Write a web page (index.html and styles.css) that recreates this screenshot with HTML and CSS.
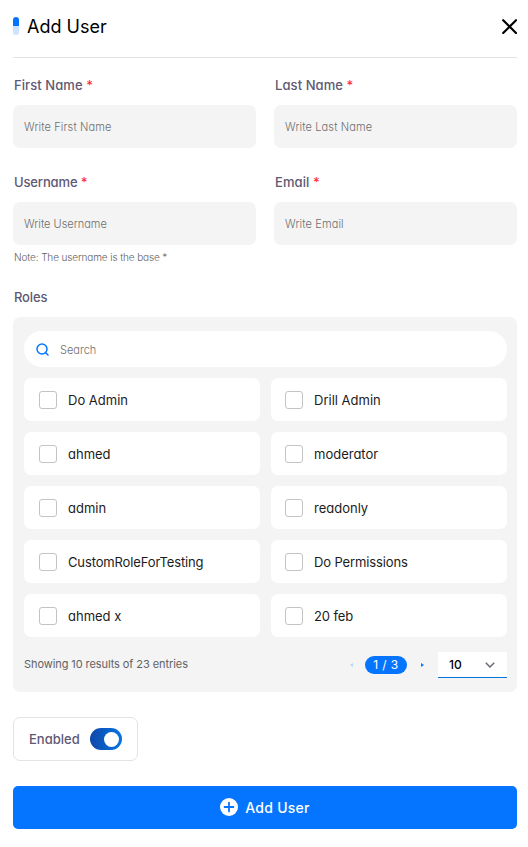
FILE: index.html
```html
<!DOCTYPE html>
<html lang="en">
<head>
<meta charset="utf-8">
<title>Add User</title>
<link rel="stylesheet" href="styles.css">
</head>
<body>
<main class="modal">
  <header class="header">
    <span class="marker"></span>
    <h1 class="title">Add User</h1>
    <svg class="close" viewBox="0 0 15 15" aria-label="Close"><path d="M1.2 1.2 14 14M14 1.2 1.2 14"/></svg>
  </header>

  <form class="form">
    <div class="fields">
      <div class="field"><label class="label">First Name <b class="req">*</b></label><div class="input">Write First Name</div></div>
      <div class="field"><label class="label">Last Name <b class="req">*</b></label><div class="input">Write Last Name</div></div>
      <div class="field"><label class="label tight">Username <b class="req">*</b></label><div class="input flat">Write Username</div><p class="note">Note: The username is the base *</p></div>
      <div class="field"><label class="label">Email <b class="req">*</b></label><div class="input">Write Email</div></div>
    </div>

    <div class="label roles-label tight">Roles</div>
    <section class="panel">
      <div class="search">
        <svg class="search-icon" viewBox="0 0 13 13"><circle cx="6" cy="6" r="5"/><path d="m9.7 9.7 2.3 2.3"/></svg>
        <span>Search</span>
      </div>
      <div class="roles">
        <div class="role"><i class="box"></i><span>Do Admin</span></div>
        <div class="role"><i class="box"></i><span>Drill Admin</span></div>
        <div class="role"><i class="box"></i><span>ahmed</span></div>
        <div class="role"><i class="box"></i><span>moderator</span></div>
        <div class="role"><i class="box"></i><span>admin</span></div>
        <div class="role"><i class="box"></i><span>readonly</span></div>
        <div class="role"><i class="box"></i><span class="tight">CustomRoleForTesting</span></div>
        <div class="role"><i class="box"></i><span class="tight">Do Permissions</span></div>
        <div class="role"><i class="box"></i><span>ahmed x</span></div>
        <div class="role"><i class="box"></i><span class="tight">20 feb</span></div>
      </div>
      <footer class="pager">
        <span class="summary">Showing 10 results of 23 entries</span>
        <svg class="arrow prev" viewBox="0 0 3 4"><path d="M3 0v4L0 2z"/></svg>
        <span class="page">1 / 3</span>
        <svg class="arrow next" viewBox="0 0 3 4"><path d="M0 0v4l3-2z"/></svg>
        <div class="select"><span>10</span><svg class="chevron" viewBox="0 0 10 6"><path d="m.8.8 4.2 4.2L9.2.8"/></svg></div>
      </footer>
    </section>

    <div class="enabled"><span>Enabled</span><span class="switch"><i class="knob"></i></span></div>

    <button class="submit" type="button">
      <svg class="plus" viewBox="0 0 18 18"><circle cx="9" cy="9" r="9"/><path d="M9 4.6v8.8M4.6 9h8.8"/></svg>
      <span>Add User</span>
    </button>
  </form>
</main>
</body>
</html>
```

FILE: styles.css
```css
* { box-sizing: border-box; }
body {
  margin: 0;
  background: #fff;
  color: #1c1c1c;
  font-family: Inter, "Open Sans", sans-serif;
  font-feature-settings: "cv11" 1;
  font-size: 13px;
}
.modal { padding: 0 11px 18px 13px; }
.header {
  display: flex;
  align-items: center;
  height: 58px;
  padding-bottom: 4px;
  border-bottom: 1px solid #e3e3e3;
}
.marker {
  width: 6px;
  height: 18px;
  margin: 0 8px 2px 0;
  border-radius: 3px;
  background: linear-gradient(#0575ff 50%, #cde3ff 50%);
}
.title {
  margin: 0;
  color: #000;
  font-size: 18px;
  font-weight: 400;
  line-height: 24px;
}
.close {
  width: 15px;
  height: 15px;
  margin-left: auto;
  fill: none;
  stroke: #000;
  stroke-width: 2.2;
  stroke-linecap: round;
}
.fields {
  display: grid;
  grid-template-columns: 1fr 1fr;
  gap: 26px 18px;
  padding-top: 19px;
}
.field { height: 71px; }
.label {
  display: block;
  height: 16px;
  margin-bottom: 12px;
  padding-left: 1px;
  color: #5e5873;
  font-size: 13px;
  font-weight: 500;
  letter-spacing: .08px;
  line-height: 16px;
}
.tight { letter-spacing: -.13px; }
.req { color: #f33; font-weight: 500; }
.input {
  display: flex;
  align-items: center;
  height: 43px;
  padding: 0 11px;
  border-radius: 7px;
  background: #f4f4f4;
  color: #6f6f6f;
  font-size: 11px;
  font-weight: 300;
  letter-spacing: .12px;
}
.flat { letter-spacing: 0; }
.note {
  margin: 6px 0 0 1px;
  color: #626262;
  font-size: 10px;
  font-weight: 300;
  letter-spacing: -.12px;
  line-height: 13px;
}
.roles-label { margin-top: 44px; }
.panel {
  height: 375px;
  padding: 14px 10px 0 11px;
  border-radius: 7px;
  background: #f4f4f4;
}
.search {
  display: flex;
  align-items: center;
  gap: 11px;
  height: 36px;
  padding-left: 12px;
  border-radius: 18px;
  background: #fff;
  color: #6f6f6f;
  font-size: 11px;
  font-weight: 300;
}
.search span { padding-top: 2px; }
.search-icon {
  width: 13px;
  height: 13px;
  fill: none;
  stroke: #0575ff;
  stroke-width: 1.5;
  stroke-linecap: round;
}
.roles {
  display: grid;
  grid-template-columns: 1fr 1fr;
  gap: 11px;
  margin-top: 11px;
}
.role {
  display: flex;
  align-items: center;
  gap: 11px;
  height: 43px;
  padding: 0 0 0 15px;
  border-radius: 7px;
  background: #fff;
}
.role:nth-child(even) { padding-left: 14px; }
.box {
  width: 18px;
  height: 18px;
  border: 1px solid #c4c4c4;
  border-radius: 3px;
}
.pager {
  display: flex;
  align-items: center;
  height: 26px;
  margin-top: 15px;
}
.summary {
  padding-bottom: 2px;
  color: #626262;
  font-size: 11px;
  letter-spacing: -.08px;
}
.arrow { width: 3px; height: 4px; fill: #0575ff; }
.prev { margin-left: auto; fill: #b8d8f8; }
.page {
  width: 42px;
  height: 18px;
  margin: 0 14px 0 12px;
  border-radius: 9px;
  background: #0575ff;
  color: #fff;
  font-size: 12px;
  letter-spacing: .4px;
  line-height: 18px;
  text-align: center;
}
.select {
  display: flex;
  align-items: center;
  justify-content: space-between;
  width: 69px;
  height: 26px;
  margin-left: 14px;
  padding: 0 12px 0 11px;
  border-bottom: 1px solid #0575d8;
  background: #fff;
  color: #000;
  font-size: 12px;
  font-weight: 500;
}
.chevron {
  width: 10px;
  height: 6px;
  fill: none;
  stroke: #666c75;
  stroke-width: 1.5;
}
.enabled {
  display: flex;
  align-items: center;
  justify-content: space-between;
  width: 125px;
  height: 44px;
  margin-top: 25px;
  padding: 0 15px;
  border: 1px solid #e3e3e5;
  border-radius: 7px;
  color: #5e5873;
  font-weight: 500;
}
.switch {
  display: flex;
  justify-content: flex-end;
  align-items: center;
  width: 32px;
  height: 22px;
  padding-right: 3px;
  border-radius: 11px;
  background: linear-gradient(90deg, #1047aa, #0575e6);
}
.knob { width: 15px; height: 15px; border-radius: 50%; background: #fff; }
.submit {
  display: flex;
  align-items: center;
  justify-content: center;
  gap: 7px;
  width: 100%;
  height: 43px;
  margin-top: 25px;
  padding: 0 0 1px;
  border: 0;
  border-radius: 5px;
  background: #0575ff;
  color: #fff;
  font-family: inherit;
  font-feature-settings: inherit;
  font-size: 14px;
  font-weight: 500;
  letter-spacing: .25px;
}
.plus { width: 18px; height: 18px; fill: #fff; }
.plus path { stroke: #0575ff; stroke-width: 1.8; stroke-linecap: round; }
```
